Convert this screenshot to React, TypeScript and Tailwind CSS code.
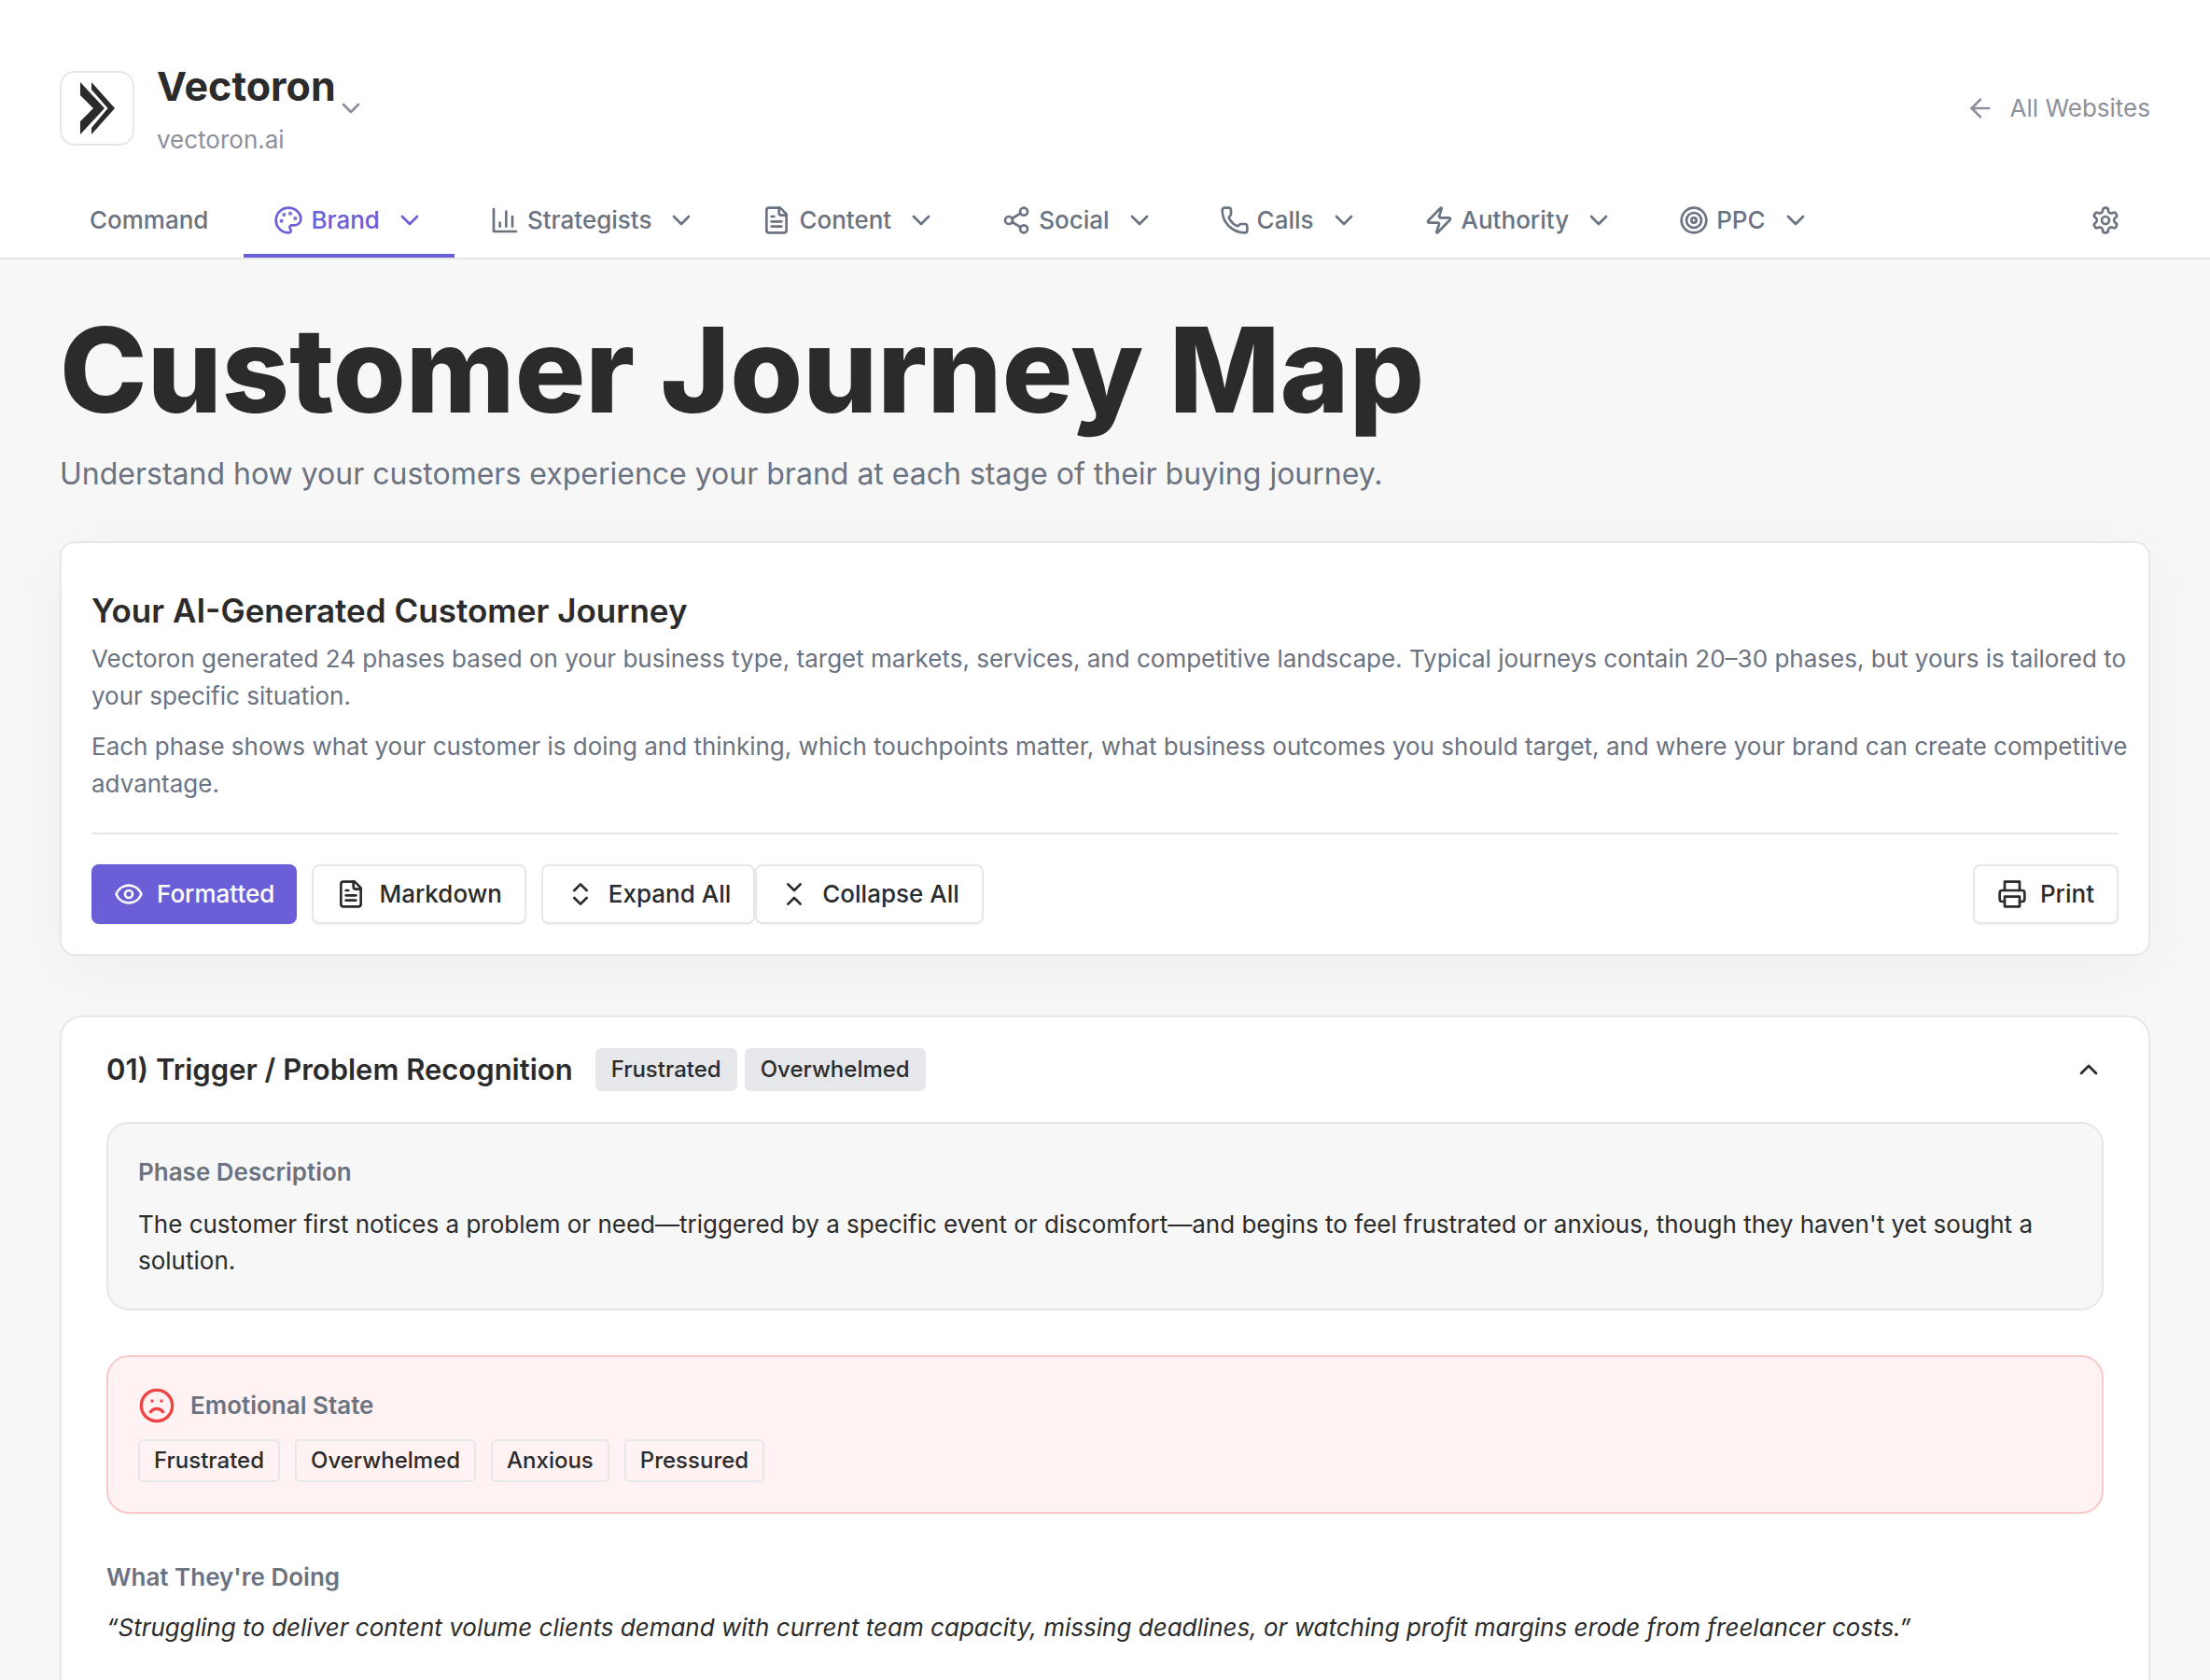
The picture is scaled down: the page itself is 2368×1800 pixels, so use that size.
import React from "react";
import {
  ArrowLeft, ChevronDown, ChevronUp, ChevronsDownUp, ChevronsUpDown, Eye, Frown,
  Palette, Phone, Share2, Target, Zap,
} from "lucide-react";

type IconProps = { className?: string };

function Stroke({ className, children }: IconProps & { children: React.ReactNode }) {
  return (
    <svg viewBox="0 0 24 24" fill="none" stroke="currentColor" strokeWidth={2} strokeLinecap="round" strokeLinejoin="round" className={className} aria-hidden="true">
      {children}
    </svg>
  );
}

const BarsIcon = ({ className }: IconProps) => (
  <Stroke className={className}>
    <path d="M3 3v18h18" />
    <path d="M18 17V9" />
    <path d="M13 17V5" />
    <path d="M8 17v-3" />
  </Stroke>
);

const DocIcon = ({ className }: IconProps) => (
  <Stroke className={className}>
    <path d="M15 2H6a2 2 0 0 0-2 2v16a2 2 0 0 0 2 2h12a2 2 0 0 0 2-2V7Z" />
    <path d="M14 2v4a2 2 0 0 0 2 2h4" />
    <path d="M10 9H8" />
    <path d="M16 13H8" />
    <path d="M16 17H8" />
  </Stroke>
);

const PrinterIcon = ({ className }: IconProps) => (
  <Stroke className={className}>
    <polyline points="6 9 6 2 18 2 18 9" />
    <path d="M6 18H4a2 2 0 0 1-2-2v-5a2 2 0 0 1 2-2h16a2 2 0 0 1 2 2v5a2 2 0 0 1-2 2h-2" />
    <rect width="12" height="8" x="6" y="14" />
  </Stroke>
);

const GearIcon = ({ className }: IconProps) => (
  <Stroke className={className}>
    <path d="M12.22 2h-.44a2 2 0 0 0-2 2v.18a2 2 0 0 1-1 1.73l-.43.25a2 2 0 0 1-2 0l-.15-.08a2 2 0 0 0-2.73.73l-.22.38a2 2 0 0 0 .73 2.73l.15.1a2 2 0 0 1 1 1.72v.51a2 2 0 0 1-1 1.74l-.15.09a2 2 0 0 0-.73 2.73l.22.38a2 2 0 0 0 2.73.73l.15-.08a2 2 0 0 1 2 0l.43.25a2 2 0 0 1 1 1.73V20a2 2 0 0 0 2 2h.44a2 2 0 0 0 2-2v-.18a2 2 0 0 1 1-1.73l.43-.25a2 2 0 0 1 2 0l.15.08a2 2 0 0 0 2.73-.73l.22-.39a2 2 0 0 0-.73-2.73l-.15-.08a2 2 0 0 1-1-1.74v-.5a2 2 0 0 1 1-1.74l.15-.09a2 2 0 0 0 .73-2.73l-.22-.38a2 2 0 0 0-2.73-.73l-.15.08a2 2 0 0 1-2 0l-.43-.25a2 2 0 0 1-1-1.73V4a2 2 0 0 0-2-2z" />
    <circle cx="12" cy="12" r="3" />
  </Stroke>
);

const tabs = [
  { label: "Strategists", Icon: BarsIcon },
  { label: "Content", Icon: DocIcon },
  { label: "Social", Icon: Share2 },
  { label: "Calls", Icon: Phone },
  { label: "Authority", Icon: Zap },
  { label: "PPC", Icon: Target },
];

const outline =
  "flex h-16 items-center gap-3.5 rounded-lg border-2 border-[#e6e7eb] bg-white px-6 shadow-xs";

function Header() {
  return (
    <header className="border-b-2 border-[#e6e7eb] bg-white px-16 pt-16">
      <div className="flex items-center justify-between">
        <button className="flex items-center text-left">
          <span className="flex size-20 items-center justify-center rounded-2xl border-2 border-[#e6e7eb]">
            <svg viewBox="-1 0 38 56" className="h-14 w-[38px] fill-[#2b2b2b]" aria-hidden="true">
              <path d="M0 0 26 28 0 56V42L14 28 0 14Z" />
              <path d="M12 0 37 28 12 56V49L29.500 28 12 8Z" />
            </svg>
          </span>
          <span className="ml-6 flex flex-col">
            <span className="text-[43px] leading-[56px] font-bold text-[#2b2b2b]">Vectoron</span>
            <span className="mt-3 text-[26px] leading-9 text-[#8b909c]">vectoron.ai</span>
          </span>
          <ChevronDown className="size-8 text-[#8b909c]" />
        </button>
        <a href="#websites" className="flex items-center gap-4 text-[26px] leading-9 text-[#8b909c]">
          <ArrowLeft className="size-8" />
          All Websites
        </a>
      </div>
      <nav className="mt-7 flex items-stretch gap-1.5 text-[26px] leading-10 font-medium text-[#6b7280]">
        <a href="#command" className="flex h-20 items-center px-8">Command</a>
        <button className="flex h-20 items-center border-b-4 border-[#6b5fd8] px-8 pt-1 text-[#6b5fd8]">
          <Palette className="mr-2 size-8" />
          Brand
          <ChevronDown className="ml-4 size-8" />
        </button>
        {tabs.map(({ label, Icon }) => (
          <button key={label} className="flex h-20 items-center px-8">
            <Icon className="mr-2 size-8" />
            {label}
            <ChevronDown className="ml-4 size-8" />
          </button>
        ))}
        <button aria-label="Settings" className="ml-auto flex h-20 items-center px-8">
          <GearIcon className="size-8" />
        </button>
      </nav>
    </header>
  );
}

export default function App() {
  return (
    <div className="min-h-screen bg-[#f7f7f7] font-['Inter',sans-serif] text-[#2b2b2b]">
      <Header />
      <main className="px-16 pt-[54px]">
        <h1 className="text-[126px] leading-[128px] font-extrabold">Customer Journey Map</h1>
        <p className="mt-6 text-[32px] leading-[48px] text-[#6b7280]">
          Understand how your customers experience your brand at each stage of their buying journey.
        </p>

        <section className="mt-12 rounded-2xl border-2 border-[#e6e7eb] bg-white px-8 pt-12 pb-8 shadow-[0_16px_64px_rgba(0,0,0,0.04)]">
          <h2 className="text-[35px] leading-[48px] font-semibold">Your AI-Generated Customer Journey</h2>
          <div className="mt-2 -mr-4 flex flex-col gap-3.5 text-[26px] leading-10 text-[#6b7280]">
            <p>
              Vectoron generated 24 phases based on your business type, target markets, services, and competitive
              landscape. Typical journeys contain 20–30 phases, but yours is tailored to your specific situation.
            </p>
            <p>
              Each phase shows what your customer is doing and thinking, which touchpoints matter, what business
              outcomes you should target, and where your brand can create competitive advantage.
            </p>
          </div>
          <div className="mt-8 flex items-center border-t-2 border-[#e6e7eb] pt-8 text-[26px] leading-10 font-medium">
            <button className="flex h-16 items-center gap-3.5 rounded-lg bg-[#6b5fd8] px-6 text-white shadow-xs">
              <Eye className="size-8" />
              Formatted
            </button>
            <button className={`${outline} ml-4`}>
              <DocIcon className="size-8" />
              Markdown
            </button>
            <button className={`${outline} ml-4`}>
              <ChevronsUpDown className="size-8" />
              Expand All
            </button>
            <button className={outline}>
              <ChevronsDownUp className="size-8" />
              Collapse All
            </button>
            <button className={`${outline} ml-auto`}>
              <PrinterIcon className="size-8" />
              Print
            </button>
          </div>
        </section>

        <section className="mt-16 rounded-t-3xl border-2 border-b-0 border-[#e6e7eb] bg-white px-12 pt-8">
          <div className="flex items-center">
            <h2 className="text-[31px] leading-[48px] font-semibold">01) Trigger / Problem Recognition</h2>
            <div className="ml-6 flex gap-2 text-2xl leading-[42px] font-medium">
              <span className="rounded-md border-2 border-[#e6e7eb] bg-[#e6e7eb] px-[15px]">Frustrated</span>
              <span className="rounded-md border-2 border-[#e6e7eb] bg-[#e6e7eb] px-[15px]">Overwhelmed</span>
            </div>
            <button aria-label="Collapse phase" className="ml-auto">
              <ChevronUp className="size-8" />
            </button>
          </div>

          <div className="mt-8 rounded-3xl border-2 border-[#e6e7eb] bg-[#f7f7f7] p-8">
            <h3 className="text-[26px] leading-10 font-semibold text-[#6b7280]">Phase Description</h3>
            <p className="mt-4 text-[26px] leading-[39px]">
              The customer first notices a problem or need—triggered by a specific event or discomfort—and begins to
              feel frustrated or anxious, though they haven't yet sought a solution.
            </p>
          </div>

          <div className="mt-12 rounded-3xl border-2 border-[#fcc9c9] bg-[#fef2f2] p-8">
            <div className="flex items-center gap-4">
              <Frown className="size-10 text-[#ef4444]" />
              <h3 className="text-[26px] leading-10 font-semibold text-[#6b7280]">Emotional State</h3>
            </div>
            <div className="mt-4 flex gap-4 text-2xl leading-[42px] font-medium">
              {["Frustrated", "Overwhelmed", "Anxious", "Pressured"].map((mood) => (
                <span key={mood} className="rounded-md border-2 border-[#e6e7eb] px-[15px]">{mood}</span>
              ))}
            </div>
          </div>

          <h3 className="mt-12 text-[26px] leading-10 font-semibold text-[#6b7280]">What They're Doing</h3>
          <p className="mt-3.5 pb-10 text-[26px] leading-[39px] italic">
            “Struggling to deliver content volume clients demand with current team capacity, missing deadlines, or
            watching profit margins erode from freelancer costs.”
          </p>
        </section>
      </main>
    </div>
  );
}
